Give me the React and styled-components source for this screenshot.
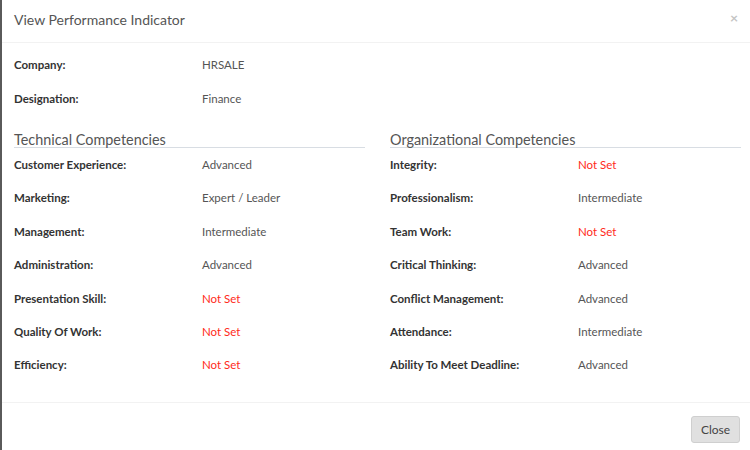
import React from "react";
import styled, { createGlobalStyle } from "styled-components";

const Global = createGlobalStyle`
  html, body { margin: 0; padding: 0; height: 100%; }
  body {
    background: #5a5a5a;
    font-family: Lato, "Open Sans", "Liberation Sans", sans-serif;
    overflow: hidden;
  }
`;

const Modal = styled.div`
  margin-left: 2px;
  background: #fff;
  min-height: 100vh;
  display: flex;
  flex-direction: column;
`;

const Header = styled.div`
  height: 43px;
  border-bottom: 1px solid #f2f2f2;
  display: flex;
  align-items: center;
  justify-content: space-between;
  padding: 0 12px;
  box-sizing: border-box;
`;

const Title = styled.h4`
  margin: 0;
  font-size: 14px;
  font-weight: 400;
  color: #555;
  padding-bottom: 4px;
`;

const CloseX = styled.span`
  font-size: 14px;
  color: #c4c4c4;
  font-weight: 700;
  margin-top: -8px;
`;

const Body = styled.div`
  padding: 5px 10px 20px 12px;
  border-bottom: 1px solid #f2f2f2;
`;

const Row = styled.div`
  display: grid;
  grid-template-columns: 188px 1fr;
  height: 33.4px;
  align-items: center;
  font-size: 11.5px;
`;

const Label = styled.div`
  font-weight: 700;
  color: #333;
`;

const Value = styled.div`
  color: ${(p) => (p.$missing ? "#ff2a1a" : "#555")};
`;

const Columns = styled.div`
  display: grid;
  grid-template-columns: 351px 351px;
  column-gap: 25px;
  margin-top: 17px;
`;

const SectionTitle = styled.div`
  font-size: 14.4px;
  color: #555;
  line-height: 15px;
  border-bottom: 1px solid #d8dde3;
`;

const Footer = styled.div`
  display: flex;
  justify-content: flex-end;
  padding: 13px 10px 0 0;
`;

const Button = styled.button`
  font-family: inherit;
  font-size: 12px;
  color: #444;
  background: #e0e0e0;
  border: 1px solid #cfcfcf;
  border-radius: 3px;
  height: 27px;
  width: 49px;
  padding: 0;
`;

const technical = [
  ["Customer Experience:", "Advanced"],
  ["Marketing:", "Expert / Leader"],
  ["Management:", "Intermediate"],
  ["Administration:", "Advanced"],
  ["Presentation Skill:", null],
  ["Quality Of Work:", null],
  ["Efficiency:", null],
];

const organizational = [
  ["Integrity:", null],
  ["Professionalism:", "Intermediate"],
  ["Team Work:", null],
  ["Critical Thinking:", "Advanced"],
  ["Conflict Management:", "Advanced"],
  ["Attendance:", "Intermediate"],
  ["Ability To Meet Deadline:", "Advanced"],
];

const Item = ({ label, value }) => (
  <Row>
    <Label>{label}</Label>
    <Value $missing={!value}>{value || "Not Set"}</Value>
  </Row>
);

export default function App() {
  return (
    <>
      <Global />
      <Modal>
        <Header>
          <Title>View Performance Indicator</Title>
          <CloseX>×</CloseX>
        </Header>
        <Body>
          <Item label="Company:" value="HRSALE" />
          <Item label="Designation:" value="Finance" />
          <Columns>
            <div>
              <SectionTitle>Technical Competencies</SectionTitle>
              {technical.map(([l, v]) => (
                <Item key={l} label={l} value={v} />
              ))}
            </div>
            <div>
              <SectionTitle>Organizational Competencies</SectionTitle>
              {organizational.map(([l, v]) => (
                <Item key={l} label={l} value={v} />
              ))}
            </div>
          </Columns>
        </Body>
        <Footer>
          <Button>Close</Button>
        </Footer>
      </Modal>
    </>
  );
}
